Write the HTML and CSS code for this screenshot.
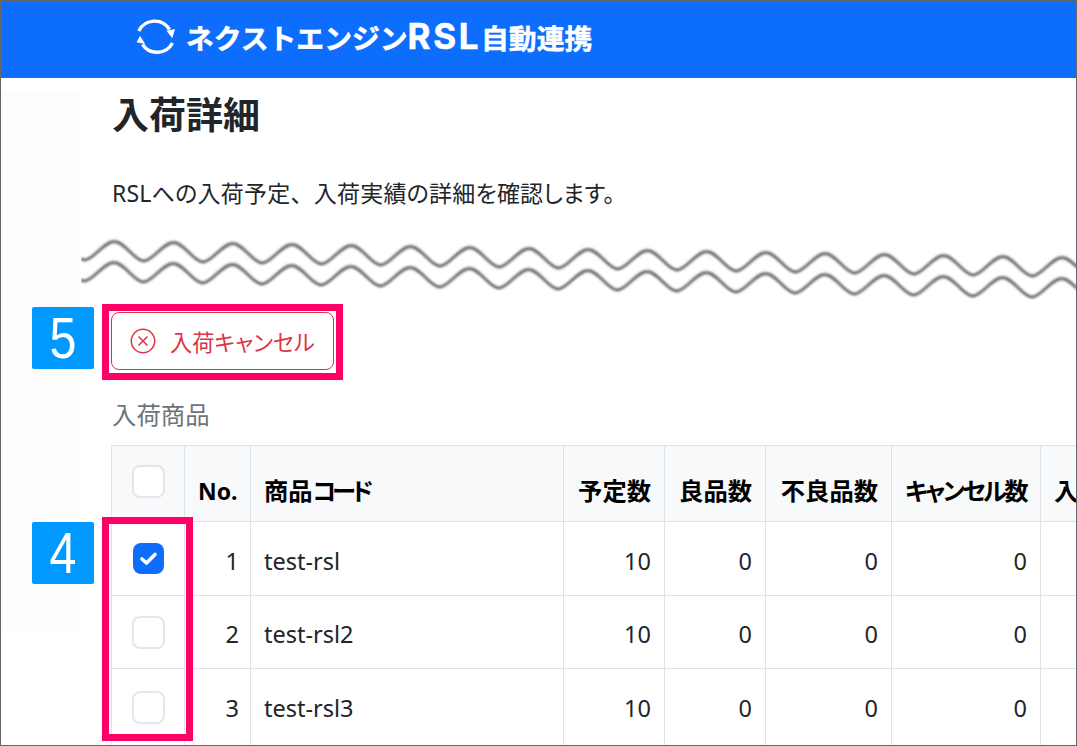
FILE: index.html
```html
<!DOCTYPE html>
<html lang="ja">
<head>
<meta charset="utf-8">
<title>入荷詳細</title>
<link rel="stylesheet" href="styles.css">
</head>
<body>
<div class="frame">
  <header class="topbar">
    <svg class="logo" width="40" height="40" viewBox="0 0 40 40" aria-hidden="true">
      <path class="logo-arc" d="M2.800 14 A17.500 17.500 0 0 1 33.500 12.500"/>
      <path class="logo-arc" d="M36.500 26 A17.500 17.500 0 0 1 6.500 27.500"/>
      <path class="logo-head" d="M30.500 13.700 L39 12 L36.300 21.300 Z"/>
      <path class="logo-head" d="M9.200 27 L0.700 25.300 L4 18.700 Z"/>
    </svg>
    <span class="brand">ネクストエンジン<span class="brand-latin">RSL</span>自動連携</span>
  </header>
  <main class="main">
    <h1 class="title">入荷詳細</h1>
    <p class="lead">RSLへの入荷予定<span class="full-comma">、</span>入荷実績の詳細を確認します。</p>
    <svg class="cut" width="996" height="72" aria-hidden="true">
      <defs>
        <filter id="soft" x="-5%" y="-5%" width="110%" height="110%"><feGaussianBlur stdDeviation="0.9"/></filter>
        <pattern id="wave" patternUnits="userSpaceOnUse" x="4" width="59.25" height="90" patternTransform="rotate(0.97)">
          <path class="wave-line" d="M0 30 C9 30 19 11 29.6 11 S50 30 59.25 30"/>
          <path class="wave-line" d="M0 51 C9 51 19 32 29.6 32 S50 51 59.25 51"/>
        </pattern>
      </defs>
      <rect width="996" height="72" fill="url(#wave)" filter="url(#soft)"/>
    </svg>
    <button class="cancel" type="button">
      <svg width="26" height="26" viewBox="0 0 26 26" aria-hidden="true">
        <circle class="cancel-icon" cx="13" cy="13" r="11.7"/>
        <path class="cancel-icon" d="M8.5 8.5 L17.5 17.5 M17.5 8.5 L8.5 17.5"/>
      </svg>
      <span>入荷キャンセル</span>
    </button>
    <div class="section-label">入荷商品</div>
    <table class="items">
      <colgroup>
        <col class="c-check"><col class="c-no"><col class="c-code"><col class="c-num"><col class="c-num"><col class="c-bad"><col class="c-can"><col class="c-rest">
      </colgroup>
      <thead>
        <tr class="row-head">
          <th class="cell-check"><span class="box box-head"></span></th>
          <th class="end th-no">No.</th>
          <th>商品<span class="tight-code">コード</span></th>
          <th class="end">予定数</th>
          <th class="end">良品数</th>
          <th class="end">不良品数</th>
          <th class="end"><span class="tight-kana">キャンセル</span>数</th>
          <th>入荷数</th>
        </tr>
      </thead>
      <tbody>
        <tr class="row-a">
          <td class="cell-check"><span class="box box-on"><svg width="19" height="15" viewBox="0 0 19 15" aria-hidden="true"><path class="tick" d="M3 8 L7.500 12 L16 3.500"/></svg></span></td>
          <td class="end no-cell">1</td><td>test-rsl</td><td class="end">10</td><td class="end">0</td><td class="end">0</td><td class="end">0</td><td></td>
        </tr>
        <tr class="row-b">
          <td class="cell-check"><span class="box"></span></td>
          <td class="end no-cell">2</td><td>test-rsl2</td><td class="end">10</td><td class="end">0</td><td class="end">0</td><td class="end">0</td><td></td>
        </tr>
        <tr class="row-c">
          <td class="cell-check"><span class="box"></span></td>
          <td class="end no-cell">3</td><td>test-rsl3</td><td class="end">10</td><td class="end">0</td><td class="end">0</td><td class="end">0</td><td></td>
        </tr>
      </tbody>
    </table>
  </main>
  <div class="badge badge-five"><span class="badge-num">5</span></div>
  <div class="badge badge-four"><span class="badge-num">4</span></div>
  <div class="mark mark-button"></div>
  <div class="mark mark-checks"></div>
</div>
</body>
</html>
```
FILE: styles.css
```css
* { box-sizing: border-box; }
html, body { margin: 0; padding: 0; background: #fff; }
body {
  font-family: "Noto Sans", "Noto Sans CJK JP", sans-serif;
  font-feature-settings: "palt";
  color: #212529;
  font-size: 23.5px;
}
.frame {
  position: relative;
  width: 1077px;
  height: 746px;
  border: 1px solid #666;
  overflow: hidden;
}
.topbar {
  display: flex;
  align-items: center;
  gap: 10px;
  height: 77px;
  padding: 0 0 5px 135px;
  background: #0d6efd;
}
.brand {
  font-family: "Noto Sans CJK JP", sans-serif;
  font-feature-settings: normal;
  font-size: 27.8px;
  line-height: 40px;
  font-weight: 700;
  color: #fff;
  -webkit-text-stroke: 0.5px #fff;
  white-space: nowrap;
}
.brand-latin {
  font-family: "Inter", sans-serif;
  font-size: 35px;
  line-height: 1;
  letter-spacing: 2.6px;
}
.logo-arc { fill: none; stroke: #fff; stroke-width: 3.4; }
.logo-head { fill: #fff; }
.main {
  background: linear-gradient(#fdfdfd, #fdfdfd) 0 0 / 80px 540px no-repeat;
  height: 668px;
}
.title {
  margin: 14px 0 0 111px;
  font-family: "Noto Sans CJK JP", sans-serif;
  font-size: 37px;
  line-height: 42px;
  font-weight: 700;
}
.lead {
  margin: 44px 0 0 111px;
  font-size: 23px;
  line-height: 30px;
  letter-spacing: 0.22px;
  white-space: nowrap;
}
.full-comma { font-feature-settings: normal; }
.cut { display: block; margin: 22px 0 0 80px; }
.wave-line { fill: none; stroke: #666; stroke-width: 2.8; }
.cancel {
  display: flex;
  align-items: center;
  gap: 14px;
  width: 223px;
  height: 58px;
  margin: 10px 0 0 110px;
  padding: 0 0 0 18px;
  background: #fff;
  border: 1px solid #dc3545;
  border-radius: 8px;
  color: #dc3545;
  font-family: "Noto Sans CJK JP", sans-serif;
  font-feature-settings: "palt";
  font-size: 22.2px;
}
.cancel-icon { fill: none; stroke: #dc3545; stroke-width: 1.5; }
.section-label {
  margin: 30px 0 0 111px;
  font-feature-settings: normal;
  font-size: 24.4px;
  line-height: 30px;
  color: #6c757d;
}
.items {
  margin: 15px 0 0 110px;
  width: 1079px;
  table-layout: fixed;
  border-collapse: collapse;
}
.c-check { width: 73px; }
.c-no { width: 66px; }
.c-code { width: 313px; }
.c-num { width: 101px; }
.c-bad { width: 126px; }
.c-can { width: 149px; }
.c-rest { width: 150px; }
.items th, .items td {
  border: 1px solid #dee2e6;
  padding: 0 13px;
  white-space: nowrap;
  overflow: hidden;
}
.items th {
  background: #f8f9fa;
  color: #000;
  font-feature-settings: normal;
  font-size: 24.3px;
  font-weight: 700;
  text-align: left;
  vertical-align: bottom;
  padding-bottom: 14px;
}
.items .th-no { font-size: 23px; }
.tight-code { font-feature-settings: "palt"; letter-spacing: -4px; }
.tight-kana { font-feature-settings: "palt"; letter-spacing: -2.6px; }
.items td { vertical-align: bottom; padding-bottom: 18px; }
.items .row-c td { padding-bottom: 21px; }
.items .no-cell { padding-right: 11px; }
.items .end { text-align: right; }
.row-head { height: 76px; }
.row-a { height: 74px; }
.row-b { height: 73px; }
.row-c { height: 77px; }
.items .cell-check, .items .row-c .cell-check { padding: 0; text-align: center; vertical-align: middle; }
.box {
  display: flex;
  align-items: center;
  justify-content: center;
  width: 33px;
  height: 33px;
  margin: 0 auto;
  background: #fff;
  border: 2px solid #e4e6ea;
  border-radius: 8px;
}
.box-head { margin-bottom: 5px; }
.box-on { width: 31px; height: 31px; background: #0d6efd; border: 0; }
.tick { fill: none; stroke: #fff; stroke-width: 3.6; stroke-linecap: round; stroke-linejoin: round; }
.badge {
  position: absolute;
  left: 31px;
  width: 62px;
  height: 62px;
  display: flex;
  align-items: center;
  justify-content: center;
  background: #0099ff;
  border-radius: 2px;
  color: #fff;
  font-family: "Liberation Sans", sans-serif;
  font-feature-settings: normal;
  font-size: 57px;
}
.badge-num { display: inline-block; transform: scaleX(0.85); }
.badge-five { top: 306px; }
.badge-four { top: 521px; }
.mark { position: absolute; border: 7px solid #ff0066; }
.mark-button { left: 101px; top: 303px; width: 241px; height: 76px; }
.mark-checks { left: 101px; top: 516px; width: 91px; height: 224px; }
```
